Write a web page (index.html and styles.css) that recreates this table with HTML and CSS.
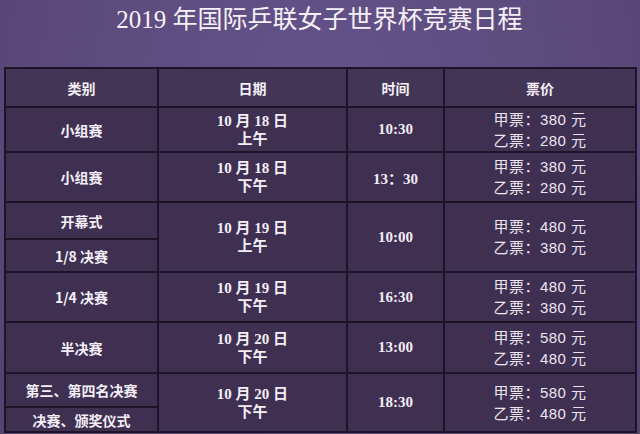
FILE: index.html
```html
<!DOCTYPE html>
<html lang="zh">
<head>
<meta charset="utf-8">
<link rel="stylesheet" href="styles.css">
</head>
<body>
<div class="page">
  <h1 class="title">2019 年国际乒联女子世界杯竞赛日程</h1>
  <table class="schedule">
    <colgroup>
      <col class="c-type"><col class="c-date"><col class="c-time"><col class="c-price">
    </colgroup>
    <tr class="r-head">
      <th>类别</th><th>日期</th><th>时间</th><th>票价</th>
    </tr>
    <tr class="r1">
      <td class="cat">小组赛</td>
      <td class="date">10 月 18 日<br>上午</td>
      <td class="time">10:30</td>
      <td class="price">甲票：380 元<br>乙票：280 元</td>
    </tr>
    <tr class="r2">
      <td class="cat">小组赛</td>
      <td class="date">10 月 18 日<br>下午</td>
      <td class="time">13：30</td>
      <td class="price">甲票：380 元<br>乙票：280 元</td>
    </tr>
    <tr class="r3a">
      <td class="cat">开幕式</td>
      <td class="date" rowspan="2">10 月 19 日<br>上午</td>
      <td class="time" rowspan="2">10:00</td>
      <td class="price" rowspan="2">甲票：480 元<br>乙票：380 元</td>
    </tr>
    <tr class="r3b">
      <td class="cat">1/8 决赛</td>
    </tr>
    <tr class="r4">
      <td class="cat">1/4 决赛</td>
      <td class="date">10 月 19 日<br>下午</td>
      <td class="time">16:30</td>
      <td class="price">甲票：480 元<br>乙票：380 元</td>
    </tr>
    <tr class="r5">
      <td class="cat">半决赛</td>
      <td class="date">10 月 20 日<br>下午</td>
      <td class="time">13:00</td>
      <td class="price">甲票：580 元<br>乙票：480 元</td>
    </tr>
    <tr class="r6a">
      <td class="cat">第三、第四名决赛</td>
      <td class="date" rowspan="2">10 月 20 日<br>下午</td>
      <td class="time" rowspan="2">18:30</td>
      <td class="price" rowspan="2">甲票：580 元<br>乙票：480 元</td>
    </tr>
    <tr class="r6b">
      <td class="cat">决赛、颁奖仪式</td>
    </tr>
  </table>
</div>
</body>
</html>
```

FILE: styles.css
```css
html, body {
  margin: 0;
  padding: 0;
}
body {
  width: 640px;
  height: 434px;
  overflow: hidden;
  background: radial-gradient(ellipse at 50% 20%, #64538a 0%, #5b4a7b 55%, #54436f 100%);
  font-family: "Liberation Serif", "Noto Sans CJK SC", serif;
  color: #f3eef6;
}
.page {
  padding: 0 5px 0 4px;
}
.title {
  margin: 0;
  height: 67px;
  padding-top: 5px;
  box-sizing: border-box;
  text-align: center;
  font-size: 25px;
  line-height: 30px;
  font-weight: normal;
  color: #f6f1f8;
  letter-spacing: 0;
}
.schedule {
  border-collapse: collapse;
  width: 631px;
  table-layout: fixed;
  background: #3f3052;
  border: 2px solid #1d1428;
}
.c-type { width: 153px; }
.c-date { width: 189px; }
.c-time { width: 97px; }
.c-price { width: 192px; }
.schedule th, .schedule td {
  border: 2px solid #1d1428;
  padding: 0;
  text-align: center;
  vertical-align: middle;
}
.schedule th {
  background: #433556;
  font-family: "Noto Sans CJK SC", sans-serif;
  font-weight: bold;
  font-size: 14px;
  color: #f4eff7;
}
.r-head { height: 39px; }
.r1 { height: 45px; }
.r2 { height: 50px; }
.r3a { height: 37px; }
.r3b { height: 33px; }
.r4 { height: 50px; }
.r5 { height: 51px; }
.r6a { height: 34px; }
.r6b { height: 25px; }
.cat {
  font-family: "Noto Sans CJK SC", sans-serif;
  font-weight: bold;
  font-size: 14px;
  line-height: 18px;
  color: #f4eff7;
}
.date {
  font-weight: bold;
  font-size: 15px;
  line-height: 18px;
  color: #f4eff7;
}
.time {
  font-weight: bold;
  font-size: 15px;
  color: #f1ecf5;
}
.price {
  font-family: "Liberation Sans", "Noto Sans CJK SC", sans-serif;
  font-size: 15px;
  line-height: 21px;
  color: #ece5f1;
  letter-spacing: 0.5px;
}
```
